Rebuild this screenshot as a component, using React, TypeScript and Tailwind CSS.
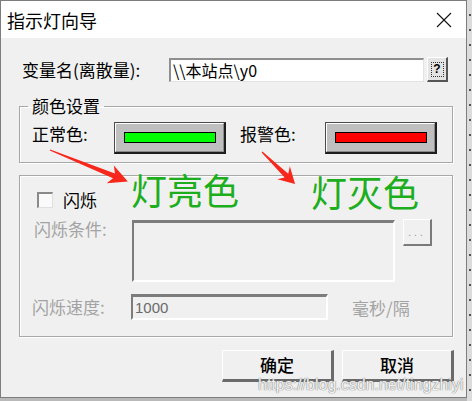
import React from "react";

const F = "font-['Noto_Sans_CJK_SC','Noto_Sans',sans-serif]";

function ColorButton({ bar }: { bar: string }) {
  return (
    <div className="w-[112px] h-[32px] border-t border-l border-[#4a4a4a] border-b-2 border-r-2 border-b-[#1e1e1e] border-r-[#1e1e1e]">
      <div className="w-full h-full border-t border-l border-white border-b border-r border-b-[#8a8a8a] border-r-[#8a8a8a] bg-[#bfbfbf] flex items-center justify-center">
        <div className={"w-[92px] h-[11px] border border-black " + bar} />
      </div>
    </div>
  );
}

function Arrow({ x, y, angle, len, head, half }: { x: number; y: number; angle: number; len: number; head: number; half: number }) {
  const L = len;
  const pts = `0,-0.6 ${L - head + 4},-2.6 ${L - head},-${half} ${L},0 ${L - head},${half} ${L - head + 4},2.6 0,0.6`;
  return <polygon points={pts} fill="#f8271c" transform={`translate(${x} ${y}) rotate(${angle})`} />;
}

export default function App() {
  return (
    <div className={"relative w-[472px] h-[401px] bg-[#b9b9b9] overflow-hidden " + F}>
      <div className="flex">
        {/* window */}
        <div className="w-[467px] h-[398px] border border-[#7d7d7d] bg-[#f0f0f0] flex flex-col">
          {/* title bar */}
          <div className="h-[37px] bg-white flex items-center justify-between shrink-0">
            <span className="ml-[6px] text-[18px] leading-[20px] text-black">指示灯向导</span>
            <svg width="16" height="16" viewBox="0 0 16 16" className="mr-[14px]">
              <path d="M1 1 L15 15 M15 1 L1 15" stroke="#111" strokeWidth="1.1" />
            </svg>
          </div>

          {/* body */}
          <div className="flex flex-col pt-[19px] text-[17px] leading-[20px] text-black">
            {/* row 1 */}
            <div className="flex items-center h-[25px]">
              <span className="ml-[21px] w-[147px]">变量名(离散量):</span>
              <div className="w-[255px] h-[24px] bg-white border-t-2 border-l-2 border-t-[#8f8f8f] border-l-[#8f8f8f] border-b border-r border-b-[#e3e3e3] border-r-[#e3e3e3] flex items-center pl-[2px] text-[16px]">
                \\本站点\y0
              </div>
              <div className="ml-[3px] w-[21px] h-[25px] border-t border-l border-white border-b-2 border-r-2 border-b-[#555] border-r-[#555] bg-[#e4e4e4] flex items-center justify-center">
                <span className="border border-dotted border-[#333] w-[13px] h-[15px] flex items-center justify-center text-[12px] leading-none font-['Liberation_Sans',sans-serif] font-bold">?</span>
              </div>
            </div>

            {/* group 1 */}
            <fieldset className="ml-[18px] mt-[14px] w-[434px] border border-[#a8a8a8] shadow-[inset_1px_1px_0_#fff,1px_1px_0_#fff]">
              <legend className="ml-[8px] px-[4px] leading-[20px]">颜色设置</legend>
              <div className="flex items-center pt-[6px] pb-[8px]">
                <span className="ml-[12px] w-[82px] -mt-[8px]">正常色:</span>
                <ColorButton bar="bg-[#00ff00]" />
                <span className="ml-[14px] w-[85px] -mt-[8px]">报警色:</span>
                <ColorButton bar="bg-[#ff0000]" />
              </div>
            </fieldset>

            {/* group 2 */}
            <div className="ml-[18px] mt-[12px] w-[434px] h-[162px] border border-[#a8a8a8] shadow-[inset_1px_1px_0_#fff,1px_1px_0_#fff] flex flex-col">
              <div className="flex items-center mt-[16px] h-[16px]">
                <div className="ml-[17px] w-[16px] h-[16px] bg-[#fafafa] border-t-2 border-l-2 border-t-[#8a8a8a] border-l-[#8a8a8a] border-b border-r border-b-[#e0e0e0] border-r-[#e0e0e0]" />
                <span className="ml-[10px]">闪烁</span>
              </div>
              <div className="flex items-start mt-[12px]">
                <span className="ml-[14px] w-[98px] text-[#a3a3a3] -mt-[1px]">闪烁条件:</span>
                <div className="w-[263px] h-[62px] border-t-[3px] border-l-2 border-t-[#7c7c7c] border-l-[#7c7c7c] border-b-2 border-r-2 border-b-white border-r-white" />
                <div className="ml-[8px] -mt-[1px] w-[29px] h-[27px] border-t border-l border-white border-b-2 border-r-2 border-b-[#7a7a7a] border-r-[#7a7a7a] flex items-center justify-center text-[10px] tracking-[3px] text-[#9a9a9a] leading-none">
                  ...
                </div>
              </div>
              <div className="flex items-center mt-[12px] h-[26px]">
                <span className="ml-[12px] w-[99px] text-[#a3a3a3]">闪烁速度:</span>
                <div className="w-[197px] h-[26px] border-t-[3px] border-l-2 border-t-[#7c7c7c] border-l-[#7c7c7c] border-b-2 border-r-2 border-b-white border-r-white flex items-center pl-[2px] text-[15px] text-[#6a6a6a] font-['Liberation_Sans',sans-serif]">
                  1000
                </div>
                <span className="ml-[24px] text-[#a3a3a3] mt-[2px]">毫秒/隔</span>
              </div>
            </div>

            {/* buttons */}
            <div className="flex mt-[13px] ml-[221px] gap-[8px]">
              <div className="w-[112px] h-[32px] border-t border-l border-white border-b-[3px] border-r-[3px] border-b-[#6a6a6a] border-r-[#6a6a6a] flex items-center justify-center text-[17px] font-medium">
                确定
              </div>
              <div className="w-[112px] h-[32px] border-t border-l border-white border-b-[3px] border-r-[3px] border-b-[#6a6a6a] border-r-[#6a6a6a] flex items-center justify-center text-[17px] font-medium">
                取消
              </div>
            </div>
          </div>
        </div>

        {/* right dotted strip */}
        <div className="w-[5px] h-[401px] bg-[#dcdcdc] flex flex-col items-end pr-[1px] pt-[14px] gap-[13px]">
          {Array.from({ length: 26 }).map((_, i) => (
            <div key={i} className="w-[2px] h-[2px] bg-[#505050]" />
          ))}
        </div>
      </div>

      {/* annotations */}
      <svg className="absolute left-0 top-0 pointer-events-none" width="472" height="401">
        <Arrow x={50} y={150} angle={22} len={84} head={19} half={9.5} />
        <Arrow x={262} y={152} angle={44} len={46} head={16} half={9} />
      </svg>
      <span className="absolute left-[131px] top-[164px] text-[36px] leading-[50px] text-[#1cae1c]">灯亮色</span>
      <span className="absolute left-[311px] top-[166px] text-[36px] leading-[50px] text-[#1cae1c]">灯灭色</span>
      <span className="absolute left-[258px] top-[375px] text-[16px] leading-[20px] text-white/90 font-['Liberation_Sans',sans-serif] [text-shadow:0_0_1px_#777,0_0_1px_#777]">
        https://blog.csdn.net/tingzhiyi
      </span>
    </div>
  );
}
